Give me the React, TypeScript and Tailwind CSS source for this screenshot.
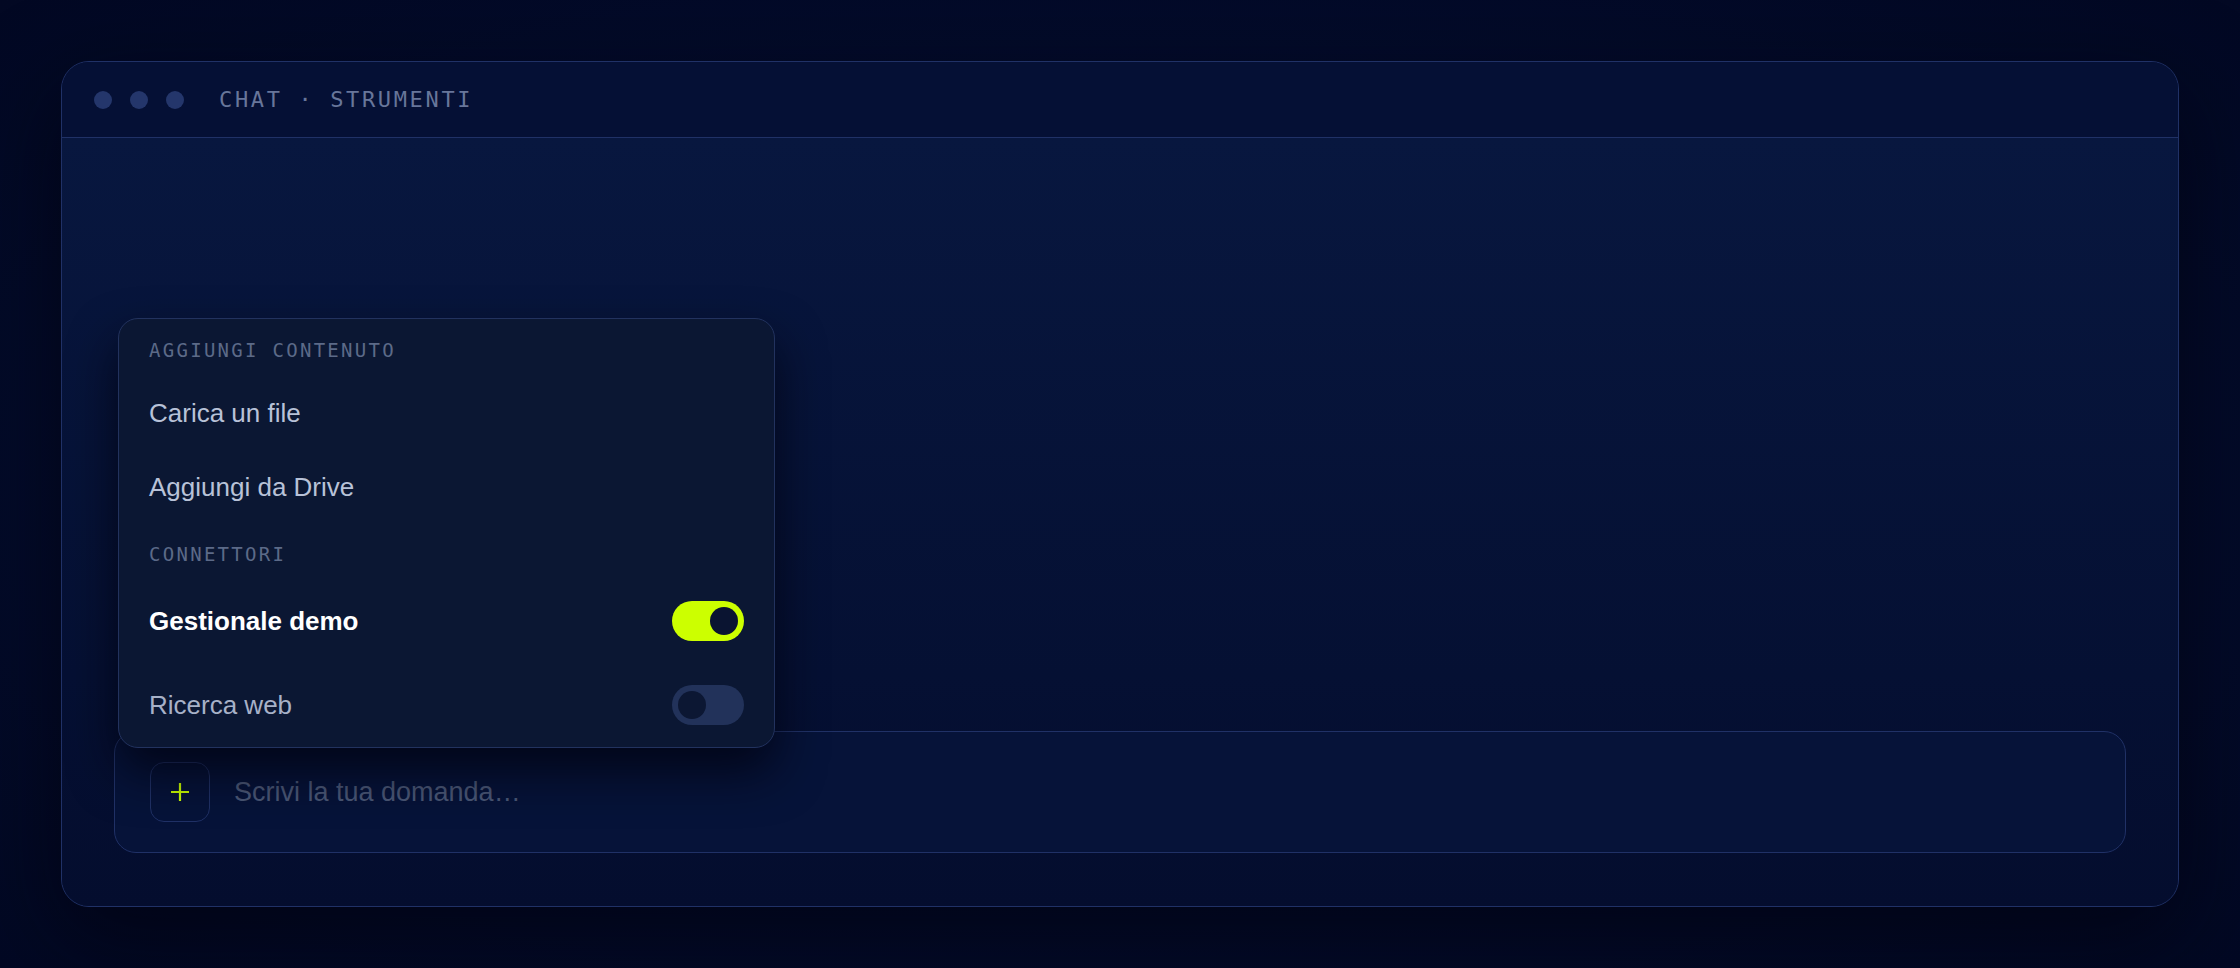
import React from "react";

const mono = "font-['DejaVu_Sans_Mono',monospace]";

function Toggle({ on }: { on: boolean }) {
  return (
    <span
      className={
        on
          ? "flex h-[40px] w-[72px] items-center justify-end rounded-full bg-[#ccff00] px-[6px]"
          : "flex h-[40px] w-[72px] items-center justify-start rounded-full bg-[#22325a] px-[6px]"
      }
    >
      <span
        className={
          on
            ? "h-[28px] w-[28px] rounded-full bg-[#0a1431]"
            : "h-[28px] w-[28px] rounded-full bg-[#0c1733]"
        }
      />
    </span>
  );
}

function SectionLabel({ children, first }: { children: React.ReactNode; first?: boolean }) {
  return (
    <div
      className={`${mono} ${first ? "pt-[19px] pb-[14px]" : "pt-[18px] pb-[13px]"} text-[19px] leading-[24px] tracking-[0.12em] text-[#5c6a88]`}
    >
      {children}
    </div>
  );
}

function ToolsMenu() {
  return (
    <div className="absolute bottom-[calc(100%-16px)] left-[3px] z-10 w-[657px] rounded-[20px] border border-[#22325e] bg-[#0b1733] px-[30px] shadow-[0_24px_48px_rgba(0,2,12,0.7)]">
      <SectionLabel first>AGGIUNGI CONTENUTO</SectionLabel>
      <div className="flex h-[74px] items-center text-[26px] text-[#b8c2d8]">Carica un file</div>
      <div className="flex h-[74px] items-center text-[26px] text-[#b8c2d8]">Aggiungi da Drive</div>
      <SectionLabel>CONNETTORI</SectionLabel>
      <div className="flex h-[84px] items-center justify-between">
        <span className="text-[26px] font-bold text-white">Gestionale demo</span>
        <Toggle on />
      </div>
      <div className="flex h-[84px] items-center justify-between">
        <span className="text-[26px] text-[#a7b1c8]">Ricerca web</span>
        <Toggle on={false} />
      </div>
    </div>
  );
}

export default function App() {
  return (
    <div className="min-h-screen w-full bg-[radial-gradient(ellipse_at_center,#05103a_0%,#030b2b_60%,#020823_100%)] p-[61px] font-['Liberation_Sans',Arial,sans-serif]">
      <div className="flex h-[846px] flex-col overflow-hidden rounded-[28px] border border-[#203166] bg-[#061134] shadow-[0_30px_90px_rgba(0,0,10,0.6)]">
        <header className="flex h-[76px] shrink-0 items-center border-b border-[#203166] bg-[#051035] px-[32px]">
          <div className="flex gap-[18px]">
            <span className="h-[18px] w-[18px] rounded-full bg-[#24366b]" />
            <span className="h-[18px] w-[18px] rounded-full bg-[#24366b]" />
            <span className="h-[18px] w-[18px] rounded-full bg-[#24366b]" />
          </div>
          <span className={`${mono} ml-[35px] text-[22px] tracking-[0.12em] text-[#68769a]`}>
            CHAT · STRUMENTI
          </span>
        </header>

        <div className="flex flex-1 flex-col justify-end bg-gradient-to-b from-[#08173f] to-[#040d2e] px-[52px] pb-[53px]">
          <div className="relative flex h-[122px] items-center gap-[24px] rounded-[22px] border border-[#203166] bg-[#061339] px-[35px]">
            <ToolsMenu />
            <button className="flex h-[60px] w-[60px] items-center justify-center rounded-[14px] border border-[#203166]">
              <svg width="22" height="22" viewBox="0 0 22 22" fill="none">
                <path d="M11 2v18M2 11h18" stroke="#ccff00" strokeWidth="2.2" />
              </svg>
            </button>
            <span className="text-[27px] text-[#4b5877]">Scrivi la tua domanda…</span>
          </div>
        </div>
      </div>
    </div>
  );
}
